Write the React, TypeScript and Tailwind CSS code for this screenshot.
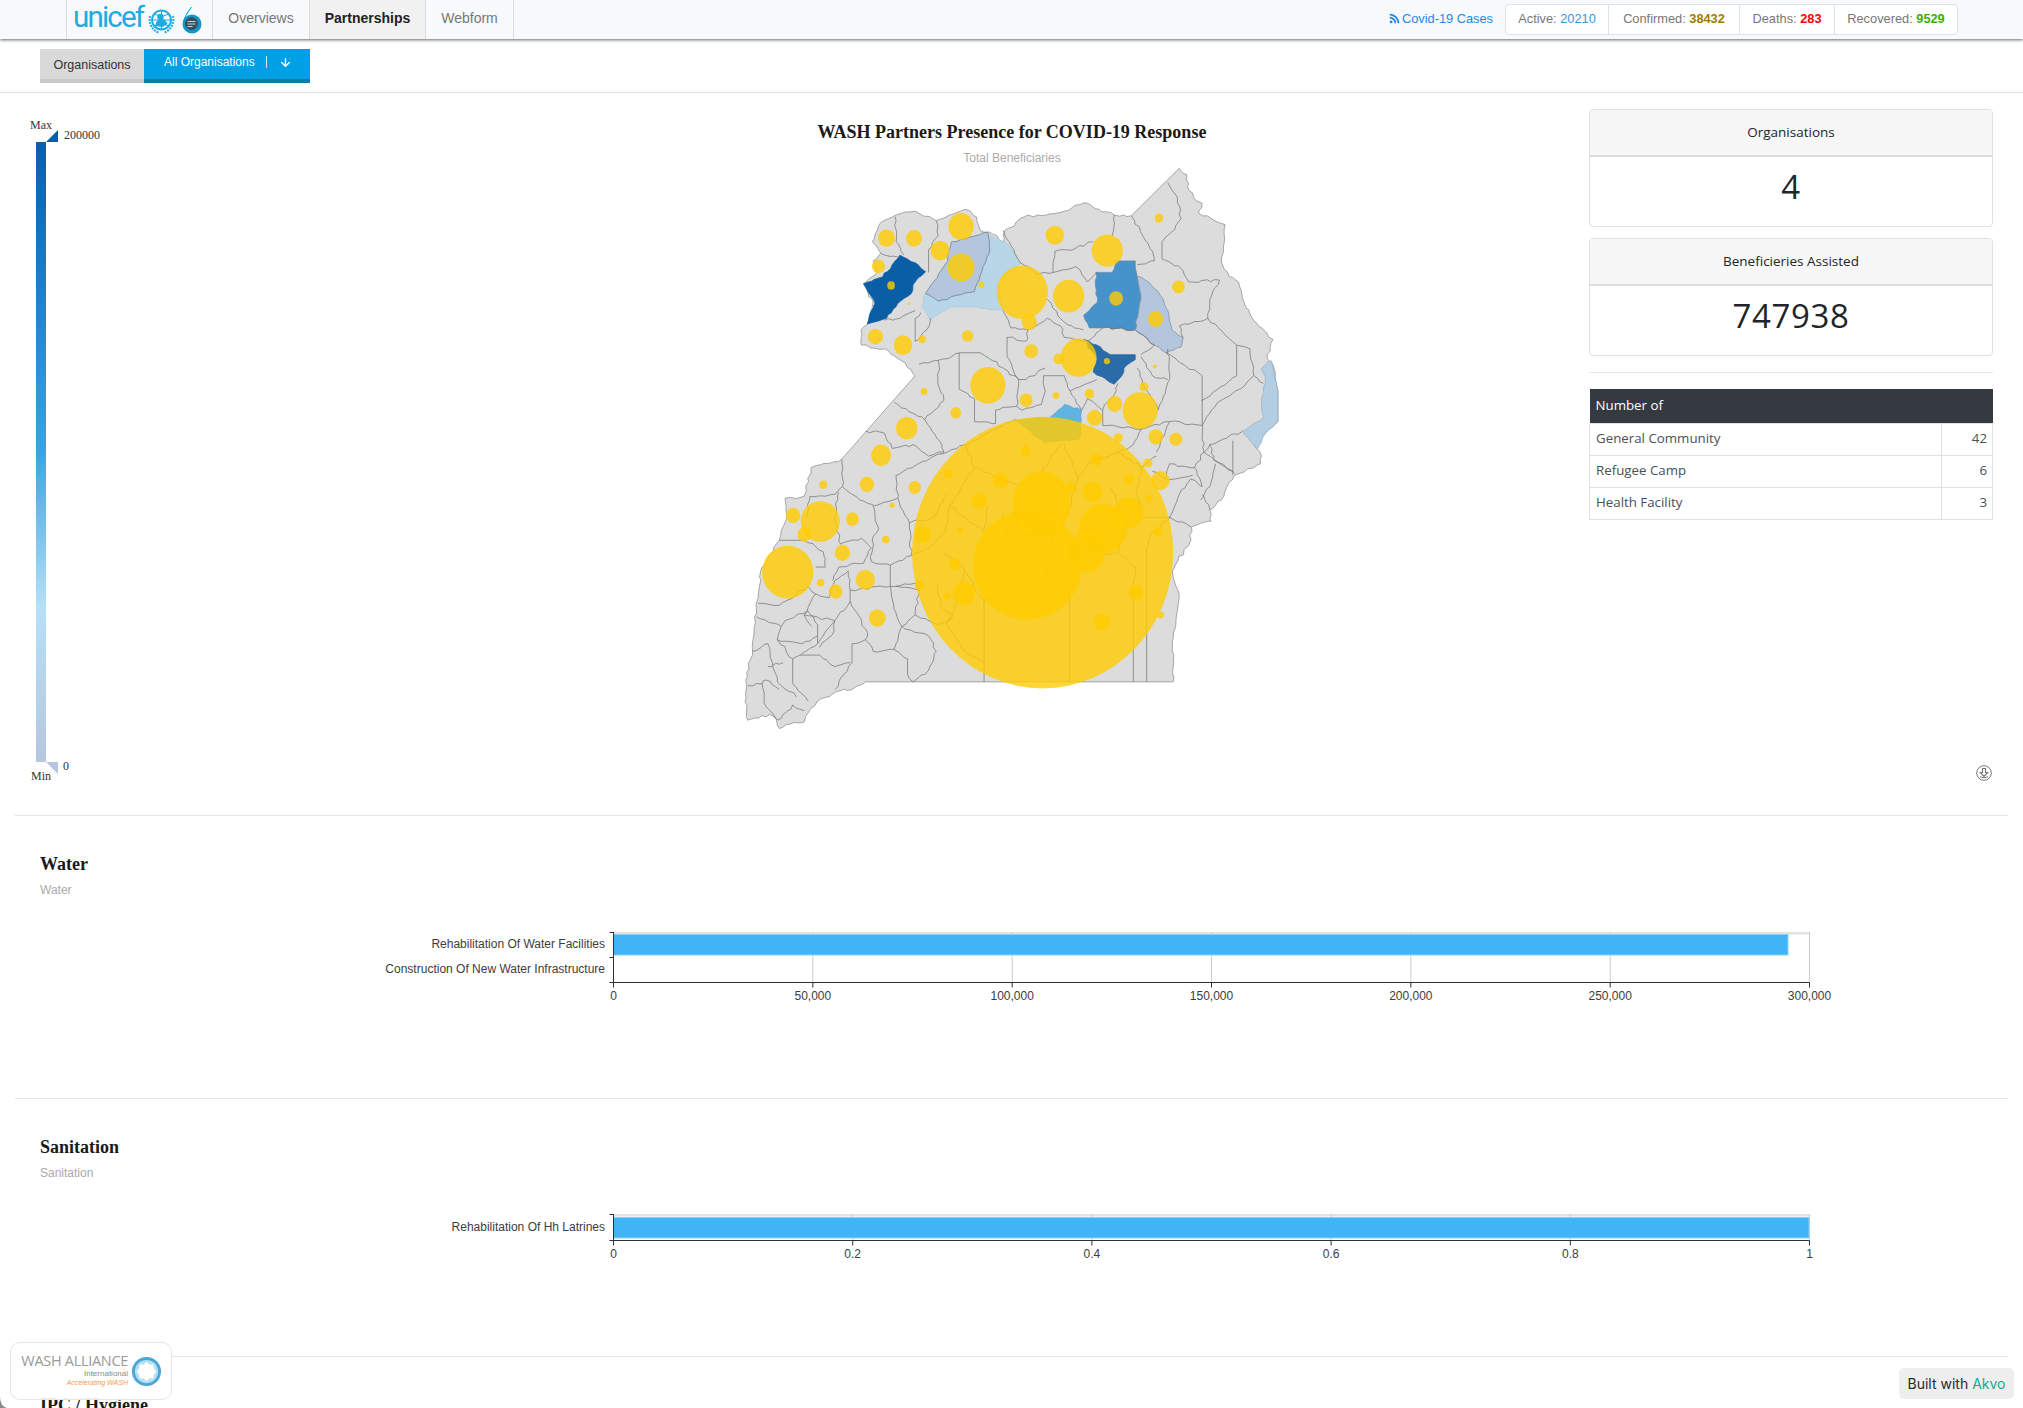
import { ArrowDown } from "lucide-react";
import { FaRss } from "react-icons/fa";

const bubbles: [number, number, number, number][] = [
  [843,1052,341,355],[803,1085,142,142],[840,925,75,85],[1000,990,62,65],[1068,948,38,40],[960,1050,45,55],
  [630,200,33,35],[435,230,22,23],[507,231,21,22],[575,263,25,26],[414,304,17,18],[630,307,35,37],[447,354,10,11],[683,352,8,8],[493,402,3,3],
  [790,372,67,70],[808,450,20,21],[911,382,41,43],[875,223,24,25],[1012,263,41,42],[1147,178,11,12],[1035,388,18,19],[1198,358,17,17],[1138,442,20,21],
  [406,488,20,20],[478,510,24,26],[528,495,10,10],[647,486,15,15],[813,526,18,18],[885,546,14,14],[937,543,47,50],[1011,552,8,8],[1136,566,5,5],
  [700,615,46,48],[533,631,9,9],[800,654,17,18],[878,642,9,9],[965,637,12,13],[1108,619,12,12],[1031,664,20,21],[1098,681,46,48],[979,700,20,21],[616,687,14,15],
  [488,727,28,29],[878,717,4,4],[1041,752,12,12],[1139,750,19,20],[1191,756,17,17],[421,798,26,28],[798,786,13,14],[983,810,15,16],[1118,818,12,12],
  [270,875,11,11],[384,874,19,20],[509,882,16,17],[597,846,12,12],[733,864,20,21],[1069,860,13,14],[1151,864,24,25],[678,916,20,21],[916,882,14,15],[974,893,25,26],[1120,910,9,9],
  [450,928,7,7],[191,955,19,20],[262,971,51,53],[346,965,17,18],[220,1005,18,19],[530,1005,21,22],[627,995,8,8],[1144,997,12,13],[433,1018,10,10],[320,1053,20,21],
  [177,1103,67,69],[613,1082,15,16],[263,1131,10,10],[302,1154,18,19],[380,1123,25,26],[521,1138,12,12],[638,1158,29,31],[593,1167,9,9],[1087,1156,19,20],[411,1223,22,23],[998,1234,21,22],[1151,1215,9,9],
];

const outline = "1200,48 1220,65 1222,95 1238,125 1260,140 1250,165 1285,180 1320,195 1318,240 1310,290 1330,330 1355,345 1370,400 1400,450 1445,495 1430,545 1445,560 1458,630 1458,710 1425,740 1395,770 1415,800 1412,820 1345,850 1325,880 1310,915 1280,940 1283,970 1232,985 1228,1025 1190,1085 1182,1100 1200,1170 1185,1260 1184,1390 380,1390 345,1410 305,1415 255,1440 225,1478 220,1495 185,1500 155,1512 148,1490 130,1475 100,1485 72,1490 68,1430 70,1365 85,1310 90,1220 100,1160 110,1090 155,1020 175,960 170,910 220,905 238,830 318,808 510,590 500,575 465,545 440,525 370,510 368,470 390,445 400,400 375,350 410,320 400,290 420,270 398,240 420,190 460,170 510,160 565,185 600,170 640,155 670,175 680,210 705,215 740,240 745,210 795,175 900,160 950,138 990,155 1030,170 1075,172";

const lines = [
  "565,185 570,225 545,260 545,320","458,175 460,240 480,275","420,270 465,280",
  "740,210 760,250 785,295","785,295 830,325 870,320 875,265 920,262 975,240","1030,170 1025,225",
  "1075,172 1105,225 1130,265 1135,290 1090,300","1170,85 1195,125 1205,180 1180,215 1155,240 1155,285 1205,310 1225,345 1305,340",
  "870,320 930,305 960,345 985,320","855,390 900,450 950,470","1305,340 1280,390 1275,440 1200,460 1210,490",
  "1275,440 1350,510 1350,590 1258,655","1165,530 1260,590 1260,720","1350,510 1385,520 1395,590 1360,625 1300,660 1260,720","1395,590 1420,610",
  "525,425 510,440 510,500 540,470 550,440","510,420 470,440 430,445","520,560 570,550 630,530 680,530 740,570 780,600 800,600 850,570",
  "740,420 760,465 805,470 800,500 750,490 750,540 780,600","805,470 855,440 890,460 900,490 960,500","960,500 1000,465 1085,470 1135,510 1100,535",
  "570,550 572,620 585,655 535,705 455,660","625,530 625,625 665,650 665,710 720,715 720,680 775,670 780,600",
  "535,705 580,770 585,790 545,800 505,770 450,780 430,740 380,735","845,590 850,630 840,665 790,680 775,670","845,590 900,590 915,630 945,680","915,630 960,610 985,600",
  "318,808 320,880 365,915 405,930 465,910 460,850 510,825 560,800 640,770","320,880 300,900 235,905 225,960","400,930 415,990 400,1010 395,1075 445,1085 500,1060 495,975",
  "465,910 495,975 560,960 590,900","310,895 300,960 315,1030 370,1015 395,1040 375,1080 310,1090 295,1125","155,1020 220,1020 270,1050 275,1090 250,1090",
  "445,1085 445,1140 520,1130","100,1185 155,1190 230,1140 250,1160 220,1215 240,1245","340,1150 340,1180 385,1260 380,1280 345,1290 345,1340 300,1410",
  "445,1140 340,1150 335,1100 300,1125 285,1170 250,1160","445,1140 460,1210 475,1245 455,1305 400,1310 380,1280","475,1245 510,1215 570,1240 600,1230 615,1190",
  "455,1305 490,1330 490,1370 505,1390","505,1390 545,1360 565,1310 545,1270 475,1245","510,1215 520,1150 460,1140",
  "95,1220 160,1245 170,1230 230,1205 255,1240 255,1290 210,1320 190,1330 190,1395 230,1440","160,1245 150,1280 190,1330","255,1290 300,1230 340,1180",
  "260,1320 300,1350 340,1340","85,1310 125,1290 150,1390 200,1430","72,1400 110,1395 115,1445 150,1490 190,1450 220,1465","110,1395 120,1385 155,1410","220,1215 300,1230",
  "150,1280 215,1290 255,1270","210,1320 260,1320","125,1350 165,1340","300,1230 295,1265 260,1300",
  "690,1170 690,1390","913,1100 913,1390","1080,1150 1080,1390","1115,1040 1115,1390","1115,1040 1130,1000 1175,960","1080,1150 1085,1090 1040,1050 1000,1060",
  "1170,520 1175,600 1145,680","1260,720 1175,710 1140,790","1260,720 1265,790 1345,845","1365,735 1280,770 1265,790 1240,830 1175,820","1280,770 1290,810 1340,840","1340,760 1340,850",
  "1240,830 1260,880 1230,860 1200,900 1175,960 1230,985","1295,820 1280,880 1255,915","1260,900 1280,940","1100,540 1130,590 1170,600","1040,610 1030,640 1000,680 1000,720 1100,730 1175,710",
  "1100,730 1080,770 1040,790 1100,830 1140,800","1175,820 1165,860 1235,850","1100,830 1090,880 1100,960 1175,960","1165,860 1130,840","1145,680 1110,620 1090,570","1000,680 960,650 945,680",
  "640,770 665,830 600,930 590,1000 530,1050 503,1060","585,1050 640,1100 690,1180 760,1140 830,1140","640,770 700,740 770,705","665,830 760,870 820,880 880,780 890,770",
  "700,930 690,1000 600,930","740,950 750,1020 800,1040 790,1100 750,1140","850,1140 860,1040 880,970 910,950 935,860 900,770","935,860 960,820 1040,790","1020,880 1060,960 1040,1050","915,1000 915,1100 960,1090",
  "570,1130 575,1190 610,1215 590,1240","640,1100 615,1190","590,1240 640,1310 690,1340",
];

function noise(a: number, b: number) {
  const v = Math.sin(a * 12.9898 + b * 78.233) * 43758.5453;
  return (v - Math.floor(v)) * 2 - 1;
}

function wiggle(src: string, closed = false, amp = 3.5) {
  const pts = src.trim().split(/\s+/).map((p) => p.split(",").map(Number));
  if (closed) pts.push(pts[0]);
  let d = `M${pts[0][0]},${pts[0][1]}`;
  for (let i = 1; i < pts.length; i++) {
    const [ax, ay] = pts[i - 1];
    const [bx, by] = pts[i];
    const len = Math.hypot(bx - ax, by - ay);
    if (ax !== bx && ay !== by && len <= 170) {
      const n = Math.ceil(len / 13);
      for (let j = 1; j < n; j++) {
        const x = ax + ((bx - ax) * j) / n;
        const y = ay + ((by - ay) * j) / n;
        const rx = Math.round(x);
        const ry = Math.round(y);
        d += ` L${(x + amp * noise(rx, ry)).toFixed(1)},${(y + amp * noise(ry, rx)).toFixed(1)}`;
      }
    }
    d += ` L${bx},${by}`;
  }
  return closed ? d + "Z" : d;
}

const districts: [string, string, string, number][] = [
  ["705,222 745,240 785,295 725,345 740,420 670,410 600,410 550,445 527,410 537,375 570,395 630,378 665,370 705,260", "#b7d6e8", "#a8c2d4", 1.5],
  ["537,375 595,290 605,240 700,215 705,260 665,370 630,378 570,395", "#b3c6dd", "#6f7f90", 2],
  ["375,350 425,332 450,300 470,275 490,285 510,295 537,318 510,345 500,375 472,395 460,410 435,440 385,455 405,400", "#0a5ea5", "#0a5ea5", 2],
  ["982,320 1025,320 1035,290 1085,290 1090,330 1100,380 1085,470 1000,465 965,465 950,432 985,400", "#4593ca", "#6a8aa0", 2],
  ["1090,330 1120,345 1145,370 1170,420 1180,470 1210,490 1205,515 1165,530 1135,510 1085,470 1100,380", "#b3c6dd", "#7f8fa0", 2],
  ["950,495 985,510 1020,535 1085,535 1085,548 1060,565 1050,590 1030,612 975,580 985,545", "#2a6ca8", "#2a6ca8", 2],
  ["770,705 860,700 900,665 945,680 940,755 850,765", "#5fb3e0", "#5fa0c8", 1.5],
  ["1440,550 1458,630 1458,710 1425,740 1405,780 1365,735 1420,700 1415,660 1425,600 1415,570", "#b3cde3", "#8fa5b8", 1.5],
];

function MapChart() {
  return (
    <svg viewBox="0 42 1526 1526" className="block w-[584px] h-[584px] ml-[266px]">
      <path d={wiggle(outline, true)} fill="#dcdcdc" stroke="#8f8f8f" strokeWidth="2" />
      {districts.map(([pts, fill, stroke, w]) => (
        <path key={pts} d={wiggle(pts, true, 2.5)} fill={fill} stroke={stroke} strokeWidth={w} />
      ))}
      {lines.map((p) => (
        <path key={p} d={wiggle(p)} fill="none" stroke="#6e6e6e" strokeWidth="1.800" strokeLinejoin="round" />
      ))}
      {bubbles.map(([cx, cy, rx, ry], i) => (
        <ellipse key={i} cx={cx} cy={cy} rx={rx} ry={ry} fill="#ffcc00" fillOpacity="0.8" />
      ))}
    </svg>
  );
}

function UnicefLogo() {
  return (
    <div className="flex items-center w-[147px] h-full pl-[6px] border-x border-[#dddddd]">
      <span className="w-[73px] text-[29.500px] leading-none tracking-[-1.800px] text-[#1cabe2] font-['Roboto',sans-serif] font-normal -mt-[3px]">unicef</span>
      <svg viewBox="0 0 28 28" className="w-[29px] h-[28px] ml-[1px]">
        <circle cx="14" cy="14" r="9.500" fill="none" stroke="#1cabe2" strokeWidth="2" />
        <path d="M14 4.500V23.500M4.500 14H23.500M7 8c4 2.500 10 2.500 14 0M7 20c4-2.500 10-2.500 14 0" stroke="#1cabe2" strokeWidth="1" fill="none" />
        <circle cx="13" cy="11" r="3.200" fill="#1cabe2" />
        <path d="M8 20c0-5 3-7 6-7s5 2 6 5l-5 3z" fill="#1cabe2" />
        <path d="M2.500 10C1 16 4 24 11 26.500M25.500 10C27 16 24 24 17 26.500" stroke="#1cabe2" strokeWidth="2" fill="none" strokeDasharray="2 1" />
      </svg>
      <svg viewBox="0 0 22 28" className="w-[22px] h-[28px] ml-[5px]">
        <path d="M10.500 1C6 7 3 12 2.500 17" stroke="#1cabe2" strokeWidth="1.200" fill="none" />
        <circle cx="11" cy="18" r="9.500" fill="#1496c8" />
        <circle cx="10.500" cy="17.500" r="6.500" fill="#37505e" />
        <path d="M6.500 15.500h8M6.500 18h8M6.500 20.500h5" stroke="#c9d4da" strokeWidth="1" />
      </svg>
    </div>
  );
}

function WaLogo() {
  return (
    <div className="absolute left-[10px] top-[1342px] w-[162px] h-[58px] rounded-[10px] border border-[#e6e6e6] bg-white/90 flex items-center pl-[11px]">
      <div className="flex flex-col items-end w-[106px] -mt-[3px]">
        <span className="text-[14.500px] leading-[16px] text-[#9a9a9a] font-['Open_Sans',sans-serif] tracking-[-0.3px] whitespace-nowrap">WASH ALLIANCE</span>
        <span className="text-[8px] leading-[9px] text-[#8a8a8a] whitespace-nowrap">International</span>
        <span className="text-[7px] leading-[9px] italic text-[#f39a55] whitespace-nowrap">Accelerating WASH</span>
      </div>
      <svg viewBox="0 0 32 32" className="w-[31px] h-[31px] ml-[3px]">
        <circle cx="16" cy="16" r="15" fill="#4aa5d8" />
        <circle cx="16" cy="16" r="12" fill="#b3e0f2" />
        <polygon points="16,6 19,9 23,8.500 23.500,12.500 26,16 23.500,19.500 23,23.500 19,23 16,26 13,23 9,23.500 8.500,19.500 6,16 8.500,12.500 9,8.500 13,9" fill="#ffffff" />
      </svg>
    </div>
  );
}

function Legend() {
  return (
    <div className="absolute left-0 top-0 font-['Liberation_Serif',serif] text-[12px] leading-[14px] text-[#333333]">
      <span className="absolute left-[30px] top-[25px]">Max</span>
      <span className="absolute left-[64px] top-[35px]">200000</span>
      <svg viewBox="0 0 12 12" className="absolute left-[46px] top-[37px] w-[12px] h-[12px]"><polygon points="0,12 12,0 12,12" fill="#0b5ea8" /></svg>
      <div className="absolute left-[36px] top-[49px] w-[10px] h-[620px] bg-[linear-gradient(to_bottom,#0b5ea8_0%,#3fa2e0_50%,#b6e0f5_75%,#b6c6df_100%)]" />
      <svg viewBox="0 0 12 12" className="absolute left-[46px] top-[669px] w-[12px] h-[12px]"><polygon points="0,0 12,0 12,12" fill="#b6c6df" /></svg>
      <span className="absolute left-[63px] top-[666px]">0</span>
      <span className="absolute left-[31px] top-[676px]">Min</span>
    </div>
  );
}

function Card({ title, value }: { title: string; value: string }) {
  return (
    <div className="h-[118px] border border-[#e0e0e0] rounded-[4px] overflow-hidden text-center font-['Open_Sans',sans-serif] text-[#212529]">
      <div className="h-[47px] bg-[#f7f7f7] border-b-2 border-[#dddddd] flex items-center justify-center text-[13.500px]">{title}</div>
      <div className="pt-[11px] text-[33px] leading-[38px] tracking-[0.6px]">{value}</div>
    </div>
  );
}

function Stats() {
  const rows: [string, string][] = [["General Community", "42"], ["Refugee Camp", "6"], ["Health Facility", "3"]];
  return (
    <div className="w-[404px] pt-[16px] flex flex-col">
      <div className="flex flex-col gap-[11px]">
        <Card title="Organisations" value="4" />
        <Card title="Beneficieries Assisted" value="747938" />
      </div>
      <div className="h-px bg-[#e8e8e8] mt-[16px] mb-[16px]" />
      <table className="w-full border-collapse font-['Open_Sans',sans-serif] text-[13.300px] text-[#495057]">
        <thead>
          <tr className="h-[34px] bg-[#343a40] text-white">
            <th colSpan={2} className="text-left font-normal pl-[6px]">Number of</th>
          </tr>
        </thead>
        <tbody>
          {rows.map(([k, v]) => (
            <tr key={k} className="h-[32px]">
              <td className="border border-[#dee2e6] pl-[6px]">{k}</td>
              <td className="border border-[#dee2e6] w-[51px] pr-[5px] text-right">{v}</td>
            </tr>
          ))}
        </tbody>
      </table>
    </div>
  );
}

const AXIS = "#2f2f2f";

function BarChart({ top, height, y0, y1, ticks, labels, barTop, barBot, barEnd }: {
  top: number; height: number; y0: number; y1: number; ticks: string[]; labels: [string, number][]; barTop: number; barBot: number; barEnd: number;
}) {
  const x0 = 613.5;
  const x1 = 1809.5;
  const ya = y1 + 0.5;
  const step = (x1 - x0) / (ticks.length - 1);
  const catTicks = labels.length === 2 ? [y0 + 0.5, (y0 + y1) / 2 + 0.5, ya] : [y0 + 0.5, ya];
  return (
    <svg viewBox={`0 ${top} 2023 ${height}`} className="block w-[2023px]" style={{ height }}>
      <rect x={x0} y={y0} width={x1 - x0} height="2.500" fill="#e2e2e2" />
      {ticks.map((_, i) => i > 0 && (
        <line key={i} x1={x0 + i * step} x2={x0 + i * step} y1={y0} y2={y1} stroke="#cccccc" />
      ))}
      <rect x={x0} y={barTop} width={barEnd - x0} height={barBot - barTop} fill="#40b4f5" stroke="#86d2fa" strokeWidth="1" />
      <line x1={x0} x2={x1} y1={ya} y2={ya} stroke={AXIS} />
      <line x1={x0} x2={x0} y1={y0} y2={ya} stroke={AXIS} />
      {catTicks.map((y) => <line key={y} x1={x0 - 4} x2={x0} y1={y} y2={y} stroke={AXIS} />)}
      {ticks.map((t, i) => <line key={t} x1={x0 + i * step} x2={x0 + i * step} y1={ya} y2={ya + 5} stroke={AXIS} />)}
      {ticks.map((t, i) => (
        <text key={t} x={x0 + i * step} y={y1 + 18} textAnchor="middle" fontSize="12" fill="#3d3d3d">{t}</text>
      ))}
      {labels.map(([t, y]) => (
        <text key={t} x="605" y={y + 4} textAnchor="end" fontSize="12" fill="#3d3d3d">{t}</text>
      ))}
    </svg>
  );
}

function Heading({ title, sub }: { title: string; sub?: string }) {
  return (
    <div className="pl-[40px] pt-[36px]">
      <h2 className="font-['Liberation_Serif',serif] font-bold text-[18px] leading-[24px] text-[#1a1a1a]">{title}</h2>
      {sub && <p className="mt-[6px] text-[12px] leading-[16px] text-[#aaaaaa]">{sub}</p>}
    </div>
  );
}

const Divider = () => <div className="h-px mx-[15px] bg-[#e5e5e5]" />;

export default function App() {
  return (
    <div className="relative h-screen overflow-hidden bg-white font-['Liberation_Sans',sans-serif]">
      <nav className="relative z-10 flex items-stretch justify-between h-[39px] pl-[66px] pr-[65px] bg-[#f8f9fa] shadow-[0_1px_3px_rgba(0,0,0,0.6)]">
        <div className="flex items-stretch text-[14px]">
          <UnicefLogo />
          <a className="flex items-center w-[97px] justify-center border-r border-[#dddddd] text-[#777777] pb-[2px]">Overviews</a>
          <a className="flex items-center w-[116px] justify-center border-r border-[#dddddd] bg-[#f1f1f1] font-bold text-[#222222] pb-[2px]">Partnerships</a>
          <a className="flex items-center w-[88px] justify-center border-r border-[#dddddd] text-[#777777] pb-[2px]">Webform</a>
        </div>
        <div className="flex items-center text-[12.800px]">
          <a className="flex items-center gap-[2px] text-[#1e88e5] mr-[12px] pb-[2px]"><FaRss className="w-[11px] h-[11px]" />Covid-19 Cases</a>
          <div className="flex items-stretch h-[31px] bg-white border border-[#dee2e6] rounded-[4px] text-[#777777]">
            <span className="flex items-center w-[103px] justify-center border-r border-[#dee2e6] pb-[2px]">Active:&nbsp;<b className="font-normal text-[#3498db]">20210</b></span>
            <span className="flex items-center w-[131px] justify-center border-r border-[#dee2e6] pb-[2px]">Confirmed:&nbsp;<b className="font-bold text-[#a27c00]">38432</b></span>
            <span className="flex items-center w-[95px] justify-center border-r border-[#dee2e6] pb-[2px]">Deaths:&nbsp;<b className="font-bold text-[#ff0000]">283</b></span>
            <span className="flex items-center w-[122px] justify-center pb-[2px]">Recovered:&nbsp;<b className="font-bold text-[#3cb000]">9529</b></span>
          </div>
        </div>
      </nav>

      <div className="h-[54px] pt-[10px] pl-[40px] flex items-start border-b border-[#e0e0e0] text-[12px]">
        <button className="w-[104px] h-[34px] bg-[#d9d9d9] border-b-4 border-[#c9c9c9] text-[#333333] text-[12.500px] pt-[2px]">Organisations</button>
        <button className="w-[166px] h-[34px] bg-[#00a1e4] border-b-4 border-[#0a7dab] text-white flex items-center pl-[20px] pb-[4px]">
          <span>All Organisations</span>
          <span className="h-[12px] w-px bg-white/80 ml-[11px]" />
          <ArrowDown className="w-[13px] h-[13px] ml-[12px]" strokeWidth={2.500} />
        </button>
      </div>

      <main className="relative h-[722px] flex">
        <Legend />
        <div className="w-[1589px] flex flex-col items-stretch">
          <div className="pl-[454px] pr-[19px] text-center pt-[27px]">
            <h1 className="font-['Liberation_Serif',serif] font-bold text-[18px] leading-[24px] text-[#1a1a1a]">WASH Partners Presence for COVID-19 Response</h1>
            <p className="mt-[6px] text-[12px] leading-[16px] text-[#aaaaaa]">Total Beneficiaries</p>
          </div>
          <div className="pl-[454px]"><MapChart /></div>
        </div>
        <Stats />
        <svg viewBox="0 0 16 16" className="absolute left-[1976px] top-[672px] w-[16px] h-[16px]" fill="none" stroke="#777777">
          <circle cx="8" cy="8" r="7.300" />
          <path d="M6.500 3.500h3v4h2.300L8 11.500 4.200 7.500h2.300z" strokeWidth="1.100" />
          <path d="M4 11.500c1 1.500 7 1.500 8 0" strokeWidth="1" />
        </svg>
      </main>

      <Divider />
      <section className="h-[282px]">
        <Heading title="Water" sub="Water" />
        <BarChart
          top={898} height={200} y0={932} y1={982}
          ticks={["0", "50,000", "100,000", "150,000", "200,000", "250,000", "300,000"]}
          labels={[["Rehabilitation Of Water Facilities", 944], ["Construction Of New Water Infrastructure", 969]]}
          barTop={934.5} barBot={955} barEnd={1788}
        />
      </section>
      <Divider />
      <section className="h-[257px]">
        <Heading title="Sanitation" sub="Sanitation" />
        <BarChart
          top={1181} height={175} y0={1214} y1={1240}
          ticks={["0", "0.2", "0.4", "0.6", "0.8", "1"]}
          labels={[["Rehabilitation Of Hh Latrines", 1227]]}
          barTop={1217.5} barBot={1238} barEnd={1809}
        />
      </section>
      <Divider />
      <Heading title="IPC / Hygiene" />

      <WaLogo />
      <div className="absolute left-[1899px] top-[1368px] w-[115px] h-[31px] rounded-[5px] bg-[#eeeeee] flex items-center justify-center font-['Inter',sans-serif] text-[14px] text-[#2a2a2a] whitespace-pre">
        Built with <span className="text-[#12ab8b]">Akvo</span>
      </div>
      <svg viewBox="0 0 8 12" className="absolute left-0 bottom-0 w-[8px] h-[12px]"><path d="M0 0C0 7 3 12 8 12H0z" fill="#8a8a8a" /></svg>
    </div>
  );
}
